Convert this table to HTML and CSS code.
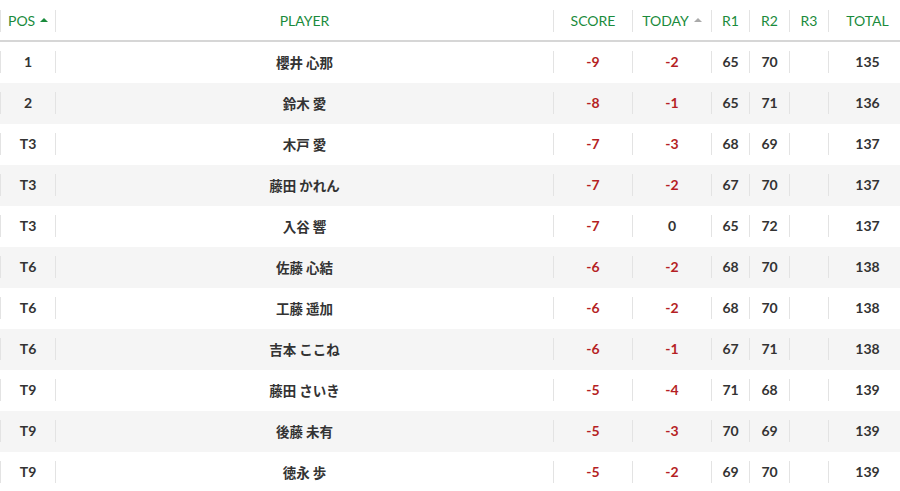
FILE: index.html
```html
<!DOCTYPE html>
<html lang="ja">
<head>
<meta charset="utf-8">
<title>Leaderboard</title>
<link rel="stylesheet" href="styles.css">
</head>
<body>
<div class="board">
  <div class="row head">
    <div class="cell pos"><div class="in left">POS<span class="tri on"></span></div></div>
    <div class="cell player"><div class="in">PLAYER</div></div>
    <div class="cell score"><div class="in">SCORE</div></div>
    <div class="cell today"><div class="in">TODAY<span class="tri off"></span></div></div>
    <div class="cell r1"><div class="in">R1</div></div>
    <div class="cell r2"><div class="in">R2</div></div>
    <div class="cell r3"><div class="in">R3</div></div>
    <div class="cell total"><div class="in">TOTAL</div></div>
  </div>

  <div class="row">
    <div class="cell pos"><div class="in">1</div></div>
    <div class="cell player"><div class="in jp">櫻井 心那</div></div>
    <div class="cell score"><div class="in red">-9</div></div>
    <div class="cell today"><div class="in red">-2</div></div>
    <div class="cell r1"><div class="in">65</div></div>
    <div class="cell r2"><div class="in">70</div></div>
    <div class="cell r3"><div class="in"></div></div>
    <div class="cell total"><div class="in">135</div></div>
  </div>
  <div class="row">
    <div class="cell pos"><div class="in">2</div></div>
    <div class="cell player"><div class="in jp">鈴木 愛</div></div>
    <div class="cell score"><div class="in red">-8</div></div>
    <div class="cell today"><div class="in red">-1</div></div>
    <div class="cell r1"><div class="in">65</div></div>
    <div class="cell r2"><div class="in">71</div></div>
    <div class="cell r3"><div class="in"></div></div>
    <div class="cell total"><div class="in">136</div></div>
  </div>
  <div class="row">
    <div class="cell pos"><div class="in">T3</div></div>
    <div class="cell player"><div class="in jp">木戸 愛</div></div>
    <div class="cell score"><div class="in red">-7</div></div>
    <div class="cell today"><div class="in red">-3</div></div>
    <div class="cell r1"><div class="in">68</div></div>
    <div class="cell r2"><div class="in">69</div></div>
    <div class="cell r3"><div class="in"></div></div>
    <div class="cell total"><div class="in">137</div></div>
  </div>
  <div class="row">
    <div class="cell pos"><div class="in">T3</div></div>
    <div class="cell player"><div class="in jp">藤田 かれん</div></div>
    <div class="cell score"><div class="in red">-7</div></div>
    <div class="cell today"><div class="in red">-2</div></div>
    <div class="cell r1"><div class="in">67</div></div>
    <div class="cell r2"><div class="in">70</div></div>
    <div class="cell r3"><div class="in"></div></div>
    <div class="cell total"><div class="in">137</div></div>
  </div>
  <div class="row">
    <div class="cell pos"><div class="in">T3</div></div>
    <div class="cell player"><div class="in jp">入谷 響</div></div>
    <div class="cell score"><div class="in red">-7</div></div>
    <div class="cell today"><div class="in">0</div></div>
    <div class="cell r1"><div class="in">65</div></div>
    <div class="cell r2"><div class="in">72</div></div>
    <div class="cell r3"><div class="in"></div></div>
    <div class="cell total"><div class="in">137</div></div>
  </div>
  <div class="row">
    <div class="cell pos"><div class="in">T6</div></div>
    <div class="cell player"><div class="in jp">佐藤 心結</div></div>
    <div class="cell score"><div class="in red">-6</div></div>
    <div class="cell today"><div class="in red">-2</div></div>
    <div class="cell r1"><div class="in">68</div></div>
    <div class="cell r2"><div class="in">70</div></div>
    <div class="cell r3"><div class="in"></div></div>
    <div class="cell total"><div class="in">138</div></div>
  </div>
  <div class="row">
    <div class="cell pos"><div class="in">T6</div></div>
    <div class="cell player"><div class="in jp">工藤 遥加</div></div>
    <div class="cell score"><div class="in red">-6</div></div>
    <div class="cell today"><div class="in red">-2</div></div>
    <div class="cell r1"><div class="in">68</div></div>
    <div class="cell r2"><div class="in">70</div></div>
    <div class="cell r3"><div class="in"></div></div>
    <div class="cell total"><div class="in">138</div></div>
  </div>
  <div class="row">
    <div class="cell pos"><div class="in">T6</div></div>
    <div class="cell player"><div class="in jp">吉本 ここね</div></div>
    <div class="cell score"><div class="in red">-6</div></div>
    <div class="cell today"><div class="in red">-1</div></div>
    <div class="cell r1"><div class="in">67</div></div>
    <div class="cell r2"><div class="in">71</div></div>
    <div class="cell r3"><div class="in"></div></div>
    <div class="cell total"><div class="in">138</div></div>
  </div>
  <div class="row">
    <div class="cell pos"><div class="in">T9</div></div>
    <div class="cell player"><div class="in jp">藤田 さいき</div></div>
    <div class="cell score"><div class="in red">-5</div></div>
    <div class="cell today"><div class="in red">-4</div></div>
    <div class="cell r1"><div class="in">71</div></div>
    <div class="cell r2"><div class="in">68</div></div>
    <div class="cell r3"><div class="in"></div></div>
    <div class="cell total"><div class="in">139</div></div>
  </div>
  <div class="row">
    <div class="cell pos"><div class="in">T9</div></div>
    <div class="cell player"><div class="in jp">後藤 未有</div></div>
    <div class="cell score"><div class="in red">-5</div></div>
    <div class="cell today"><div class="in red">-3</div></div>
    <div class="cell r1"><div class="in">70</div></div>
    <div class="cell r2"><div class="in">69</div></div>
    <div class="cell r3"><div class="in"></div></div>
    <div class="cell total"><div class="in">139</div></div>
  </div>
  <div class="row">
    <div class="cell pos"><div class="in">T9</div></div>
    <div class="cell player"><div class="in jp">徳永 歩</div></div>
    <div class="cell score"><div class="in red">-5</div></div>
    <div class="cell today"><div class="in red">-2</div></div>
    <div class="cell r1"><div class="in">69</div></div>
    <div class="cell r2"><div class="in">70</div></div>
    <div class="cell r3"><div class="in"></div></div>
    <div class="cell total"><div class="in">139</div></div>
  </div>
</div>
</body>
</html>
```
FILE: styles.css
```css
html, body {
  margin: 0;
  padding: 0;
  background: #fff;
  overflow: hidden;
}
body {
  font-family: Lato, "Noto Sans CJK JP", sans-serif;
  font-size: 14px;
  color: #333;
}
.board {
  width: 900px;
  display: flex;
  flex-direction: column;
}
.row {
  display: flex;
  height: 41px;
}
.row:nth-child(odd) {
  background: #f5f5f5;
}
.row.head {
  background: #fff;
  height: 40px;
  border-bottom: 2px solid #d6d6d6;
  color: #1a8b3c;
  font-size: 14px;
}
.cell {
  padding-top: 9px;
  box-sizing: border-box;
}
.head .cell {
  padding-top: 10px;
}
.in {
  height: 22px;
  border-left: 1px solid #e3e3e3;
  display: flex;
  align-items: center;
  justify-content: center;
  font-weight: 700;
  line-height: 22px;
}
.head .in {
  font-weight: 400;
}
.in.left {
  justify-content: flex-start;
  padding-left: 7px;
}
.in.jp {
  font-family: "Noto Sans CJK JP", sans-serif;
  font-size: 13.5px;
  font-weight: 700;
}
.red {
  color: #b51f24;
}
.pos { width: 55px; }
.player { width: 498px; }
.score { width: 79px; }
.today { width: 79px; }
.r1 { width: 38px; }
.r2 { width: 40px; }
.r3 { width: 39px; }
.total { width: 72px; }
.total .in { padding-left: 6px; }
.tri {
  display: inline-block;
  width: 0;
  height: 0;
  border-left: 4px solid transparent;
  border-right: 4px solid transparent;
  margin-left: 5px;
  margin-bottom: 2px;
}
.tri.on { border-bottom: 4px solid #1a8b3c; }
.tri.off { border-bottom: 4px solid #aaa; }
```
